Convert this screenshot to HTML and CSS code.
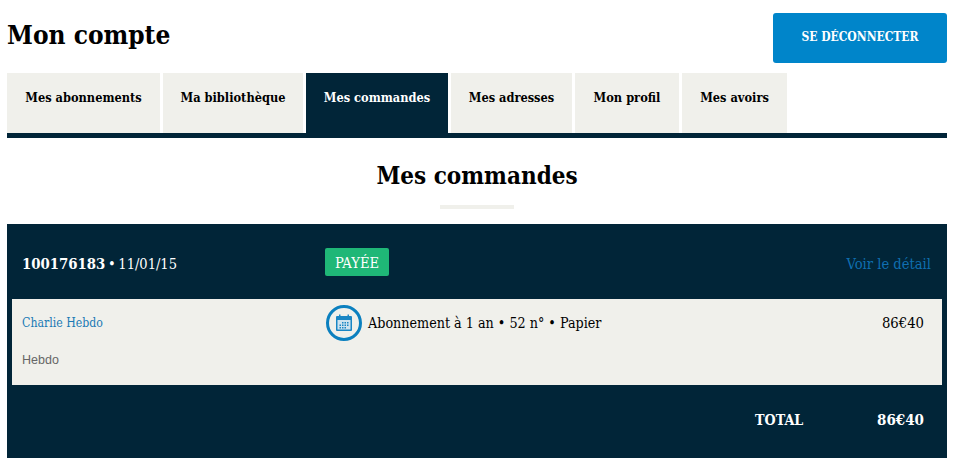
FILE: index.html
```html
<!DOCTYPE html>
<html lang="fr">
<head>
    <meta charset="UTF-8">
    <meta name="viewport" content="width=device-width, initial-scale=1.0">
    <title>Mon compte</title>
    <link rel="stylesheet" href="styles.css">
</head>
<body>
    <div class="top">
        <h1 class="title">Mon compte</h1>
        <a class="logout" href="#">SE DÉCONNECTER</a>
    </div>

    <div class="tabs">
        <a class="tab" href="#">Mes abonnements</a>
        <a class="tab" href="#">Ma bibliothèque</a>
        <a class="tab active" href="#">Mes commandes</a>
        <a class="tab" href="#">Mes adresses</a>
        <a class="tab" href="#">Mon profil</a>
        <a class="tab" href="#">Mes avoirs</a>
    </div>

    <h2 class="subtitle">Mes commandes</h2>
    <div class="rule"></div>

    <div class="order">
        <div class="order-head">
            <div class="order-id"><b>100176183</b> • 11/01/15</div>
            <div><span class="badge">PAYÉE</span></div>
            <a class="detail" href="#">Voir le détail</a>
        </div>
        <div class="order-line">
            <div class="product">
                <a class="product-name" href="#">Charlie Hebdo</a>
                <div class="product-type">Hebdo</div>
            </div>
            <div class="offer">
                <span class="offer-icon">
                    <svg width="18" height="18" viewBox="0 0 18 18">
                        <rect x="1" y="2" width="16" height="15" rx="1" fill="#1a86c4"/>
                        <rect x="4" y="0.5" width="1.5" height="3" fill="#1a86c4"/>
                        <rect x="12.5" y="0.5" width="1.5" height="3" fill="#1a86c4"/>
                        <rect x="2.5" y="6" width="13" height="9.5" fill="#cfe3ef"/>
                        <path d="M7 8h1.5v1.5H7zM9.5 8H11v1.5H9.5zM12 8h1.5v1.5H12zM4.5 10.5H6V12H4.5zM7 10.5h1.500V12H7zM9.5 10.5H11V12H9.5zM12 10.5h1.500V12H12zM4.5 13H6v1.500H4.5zM7 13h1.500v1.500H7zM9.5 13H11v1.500H9.5z" fill="#1a86c4"/>
                    </svg>
                </span>
                <span>Abonnement à 1 an • 52 n° • Papier</span>
            </div>
            <div class="price">86€40</div>
        </div>
        <div class="order-total">
            <span class="total-label">TOTAL</span>
            <span class="total-price">86€40</span>
        </div>
    </div>
</body>
</html>
```

FILE: styles.css
```css
body{
    margin: 0;
    padding: 13px 7px 0;
    background: white;
    color: #000;
    font-family: "DejaVu Serif Condensed", "DejaVu Serif", serif;
}
a{
    text-decoration: none;
}
.top{
    display: flex;
    justify-content: space-between;
    height: 50px;
    margin-bottom: 10px;
}
.title{
    margin: 0;
    font-size: 26px;
    line-height: 44px;
}
.logout{
    width: 174px;
    height: 50px;
    line-height: 49px;
    text-align: center;
    font-size: 12px;
    font-weight: bold;
    color: white;
    background: #0085ca;
    border-radius: 3px;
}
.tabs{
    display: grid;
    grid-template-columns: 153px 140px 142px 121px 104px 105px;
    column-gap: 3px;
    height: 60px;
    border-bottom: 5px solid #012538;
}
.tab{
    text-align: center;
    padding-top: 16px;
    font-size: 12.7px;
    line-height: 18px;
    font-weight: bold;
    color: #000;
    background: #f0f0eb;
}
.tab.active{
    color: white;
    background: #012538;
}
.subtitle{
    margin: 23px 0 0;
    text-align: center;
    font-size: 24px;
    line-height: 30px;
}
.rule{
    width: 74px;
    height: 4px;
    margin: 14px auto 15px;
    background: #f0f0eb;
}
.order{
    background: #012538;
    height: 234px;
    padding: 0 5px;
}
.order-head, .order-line{
    display: grid;
    grid-template-columns: 303px 1fr auto;
}
.order-head{
    height: 75px;
    align-items: center;
    padding: 0 11px 0 10px;
    color: white;
}
.order-id{
    padding-top: 4px;
    font-size: 14.5px;
    word-spacing: -1.5px;
}
.order-id b{
    font-size: 14.8px;
}
.badge{
    display: inline-block;
    width: 64px;
    height: 28px;
    line-height: 30px;
    text-align: center;
    font-size: 14.6px;
    color: white;
    background: #1fb777;
    border-radius: 2px;
}
.detail{
    padding-top: 3px;
    font-size: 14.6px;
    color: #0f6fb0;
}
.order-line{
    height: 86px;
    padding: 6px 18px 0 10px;
    box-sizing: border-box;
    background: #f0f0eb;
}
.product-name{
    display: block;
    margin-top: 11px;
    font-size: 12.2px;
    color: #1a7ab5;
}
.product-type{
    margin-top: 23px;
    font-family: "Liberation Sans", sans-serif;
    font-size: 12.5px;
    color: #666;
}
.offer{
    display: flex;
    align-items: flex-start;
    gap: 6px;
    font-size: 14.2px;
    line-height: 36px;
}
.offer-icon{
    display: flex;
    align-items: center;
    justify-content: center;
    width: 36px;
    height: 36px;
    margin-left: 1px;
    box-sizing: border-box;
    border: 3px solid #0b80bf;
    border-radius: 50%;
}
.price{
    font-size: 14.7px;
    line-height: 36px;
}
.order-total{
    display: flex;
    justify-content: flex-end;
    align-items: center;
    height: 70px;
    padding: 0 18px;
    font-weight: bold;
    color: white;
}
.total-label{
    width: 122px;
    font-size: 14.2px;
}
.total-price{
    font-size: 15px;
}
```
